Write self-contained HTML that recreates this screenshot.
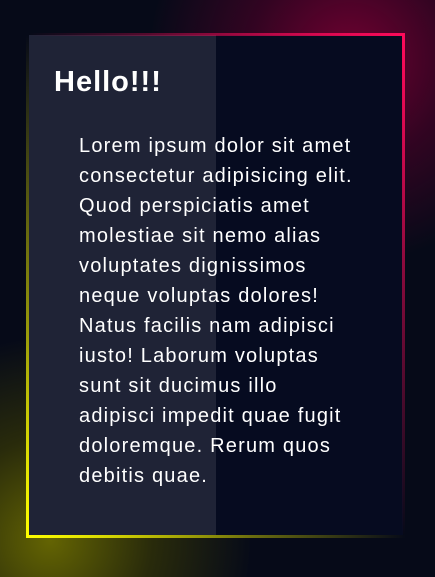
<!DOCTYPE html>
<html><head><style>
html,body{margin:0;padding:0;width:435px;height:577px;overflow:hidden;}
body{background:#060a18;font-family:"Liberation Sans",sans-serif;}
.wrap{position:relative;width:435px;height:577px;overflow:hidden;}
.g1{position:absolute;left:150px;top:-150px;width:400px;height:420px;border-radius:50%;background:radial-gradient(circle,rgba(120,0,50,0.95) 0%,rgba(80,0,40,0.6) 35%,rgba(6,10,24,0) 70%);}
.g2{position:absolute;left:-150px;top:330px;width:400px;height:420px;border-radius:50%;background:radial-gradient(circle,rgba(110,110,0,0.9) 0%,rgba(70,70,0,0.55) 35%,rgba(6,10,24,0) 70%);}
.card{position:absolute;left:29px;top:35px;width:374px;height:500px;background:#060b20;}
.card .l{position:absolute;left:0;top:0;width:187px;height:500px;background:#1f2336;}
.bt{position:absolute;left:29px;top:33px;width:376px;height:3px;background:linear-gradient(90deg,rgba(255,0,90,0) 0%,#ff0a5a 100%);}
.br{position:absolute;left:402px;top:33px;width:3px;height:503px;background:linear-gradient(180deg,#ff0a5a 0%,rgba(255,0,90,0) 100%);}
.bl{position:absolute;left:26px;top:35px;width:3px;height:503px;background:linear-gradient(180deg,rgba(255,255,0,0) 0%,#ffff00 100%);}
.bb{position:absolute;left:26px;top:535px;width:380px;height:3px;background:linear-gradient(90deg,#ffff00 0%,rgba(255,255,0,0) 100%);}
h1{position:absolute;left:54px;top:65px;margin:0;color:#fff;font-size:29px;font-weight:bold;line-height:34px;letter-spacing:1px;}
p{position:absolute;left:79px;top:131px;margin:0;color:#fff;font-size:20px;line-height:30px;letter-spacing:1.2px;white-space:nowrap;}
</style></head><body><div class="wrap">
<div class="g1"></div><div class="g2"></div>
<div class="card"><div class="l"></div></div>
<div class="bt"></div><div class="br"></div><div class="bl"></div><div class="bb"></div>
<h1>Hello!!!</h1>
<p>Lorem ipsum dolor sit amet<br>consectetur adipisicing elit.<br>Quod perspiciatis amet<br>molestiae sit nemo alias<br>voluptates dignissimos<br>neque voluptas dolores!<br>Natus facilis nam adipisci<br>iusto! Laborum voluptas<br>sunt sit ducimus illo<br>adipisci impedit quae fugit<br>doloremque. Rerum quos<br>debitis quae.</p>
</div></body></html>
